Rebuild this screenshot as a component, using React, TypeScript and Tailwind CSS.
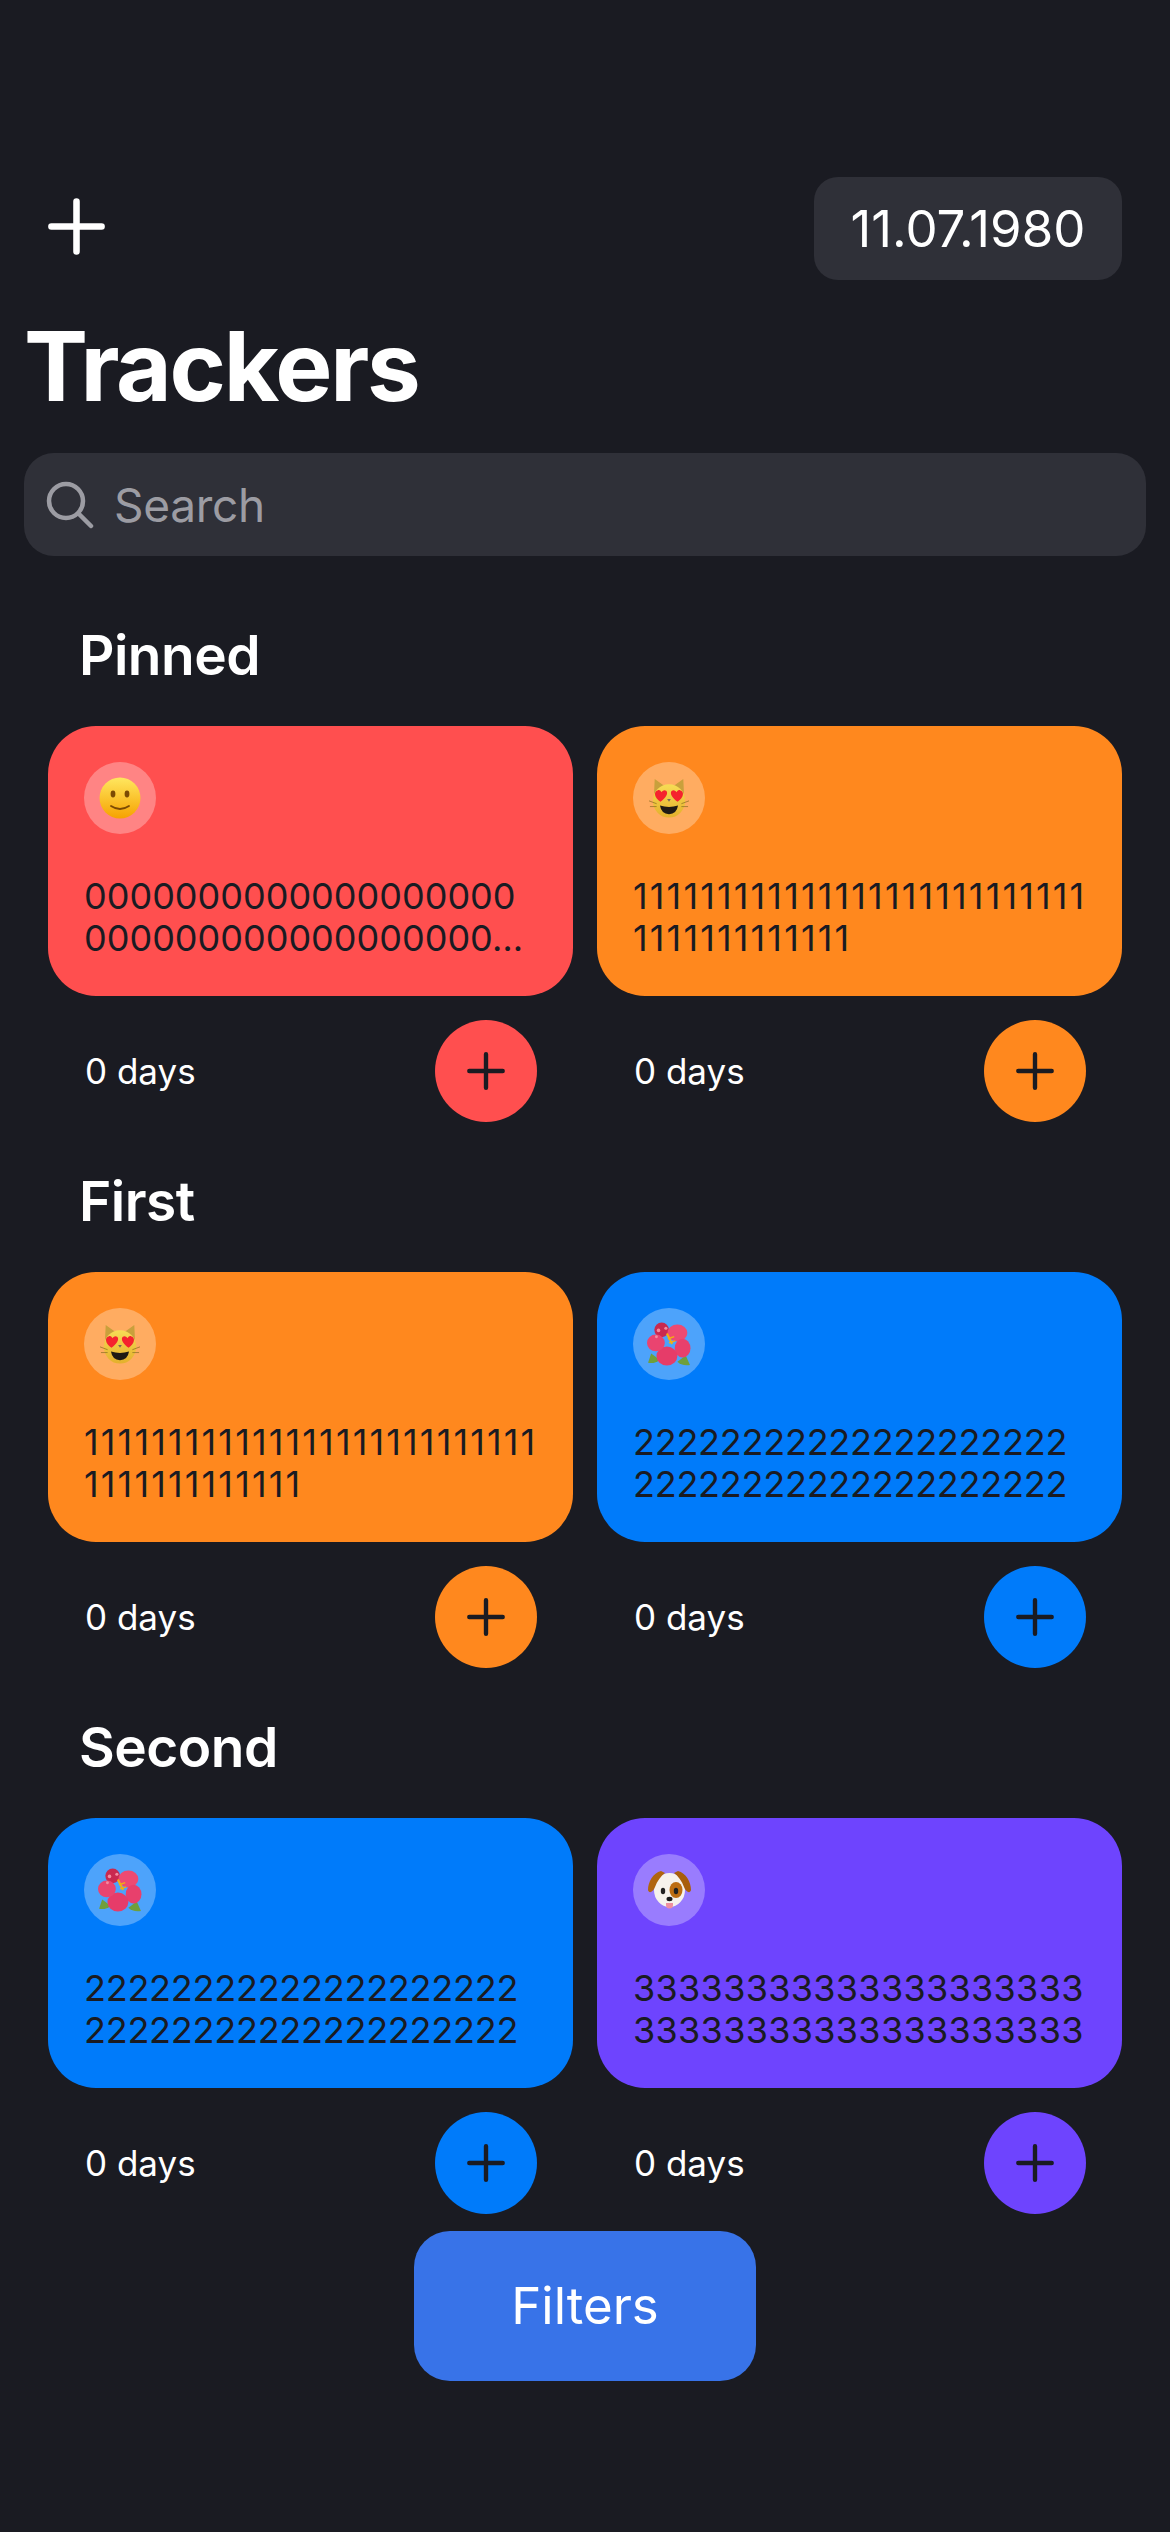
const trackers = {
  zero: {
    emoji: <SmileEmoji />,
    lines: ['0000000000000000000', '000000000000000000…'],
    color: 'bg-[#ff4f4f]',
    tracking: 'tracking-[0px]',
  },
  one: {
    emoji: <CatEmoji />,
    lines: ['111111111111111111111111111', '1111111111111'],
    color: 'bg-[#ff881e]',
    tracking: 'tracking-[2.15px]',
  },
  two: {
    emoji: <FlowerEmoji />,
    lines: ['22222222222222222222', '22222222222222222222'],
    color: 'bg-[#007bfa]',
    tracking: 'tracking-[-0.25px]',
  },
  three: {
    emoji: <DogEmoji />,
    lines: ['33333333333333333333', '33333333333333333333'],
    color: 'bg-[#6e44fe]',
    tracking: 'tracking-[0.3px]',
  },
}

const sections = [
  { name: 'Pinned', items: [trackers.zero, trackers.one] },
  { name: 'First', items: [trackers.one, trackers.two] },
  { name: 'Second', items: [trackers.two, trackers.three] },
]

export default function App() {
  return (
    <div className="h-[2532px] w-[1170px] overflow-hidden bg-[#1a1b22] pt-[177px] font-['Inter',sans-serif] text-white">
      <div className="flex items-start justify-between px-[48px]">
        <PlusIcon className="mt-[21px] h-[57px] w-[57px] text-white" />
        <div className="flex h-[103px] w-[308px] items-center justify-center rounded-[24px] bg-[#2f3038] text-[51px] leading-none">
          11.07.1980
        </div>
      </div>

      <h1 className="mt-[28px] pl-[24px] text-[96px] leading-[116px] font-bold tracking-[-2.2px]">Trackers</h1>

      <div className="mx-[24px] mt-[29px] flex h-[103px] items-center rounded-[30px] bg-[#2f3038] pl-[22px]">
        <svg viewBox="0 0 48 48" fill="none" stroke="#9c9ca3" strokeWidth="4.5" strokeLinecap="round" className="h-[48px] w-[48px]">
          <circle cx="20" cy="20" r="17" />
          <path d="M33 33 L45 45" />
        </svg>
        <span className="ml-[20px] text-[46px] leading-none tracking-[-0.3px] text-[#9c9ca3]">Search</span>
      </div>

      {sections.map((section, i) => (
        <section key={section.name} className={i === 0 ? 'mt-[65px]' : 'mt-[45px]'}>
          <h2 className="pl-[79px] text-[55px] leading-[68px] font-semibold tracking-[-0.5px]">{section.name}</h2>
          <div className="mt-[37px] grid grid-cols-[525px_525px] gap-x-[24px] px-[48px]">
            {section.items.map((t, j) => (
              <TrackerCard key={j} {...t} />
            ))}
          </div>
        </section>
      ))}

      <div className="mt-[17px] flex justify-center">
        <button className="h-[150px] w-[342px] rounded-[36px] bg-[#3873e8] text-[51px] text-white">Filters</button>
      </div>
    </div>
  )
}

function TrackerCard({ emoji, lines, color, tracking }: { emoji: React.ReactNode; lines: string[]; color: string; tracking: string }) {
  return (
    <div>
      <div className={`h-[270px] rounded-[48px] p-[36px] ${color}`}>
        <div className="flex h-[72px] w-[72px] items-center justify-center rounded-full bg-white/30">{emoji}</div>
        <p className={`mt-[41px] text-[36px] leading-[42px] whitespace-nowrap text-[#1a1b22] ${tracking}`}>
          {lines.map((line, i) => (
            <span key={i} className="block">{line}</span>
          ))}
        </p>
      </div>
      <div className="mt-[24px] flex items-center justify-between pr-[36px] pl-[37px]">
        <span className="text-[35px] leading-[44px]">0 days</span>
        <div className={`flex h-[102px] w-[102px] items-center justify-center rounded-full ${color}`}>
          <PlusIcon className="h-[38px] w-[38px] text-[#1a1b22]" />
        </div>
      </div>
    </div>
  )
}

function PlusIcon({ className }: { className: string }) {
  return (
    <svg viewBox="0 0 100 100" fill="none" className={className}>
      <path d="M50 6 V94 M6 50 H94" stroke="currentColor" strokeLinecap="round" strokeWidth="11.5" />
    </svg>
  )
}

function SmileEmoji() {
  return (
    <svg viewBox="0 0 42 42" className="h-[42px] w-[42px]">
      <defs>
        <linearGradient id="smile" x1="0" y1="0" x2="0" y2="1">
          <stop offset="0" stopColor="#ffe75f" />
          <stop offset="1" stopColor="#f6a200" />
        </linearGradient>
      </defs>
      <circle cx="21" cy="21" r="20.5" fill="url(#smile)" />
      <ellipse cx="14" cy="17" rx="2.4" ry="3.4" fill="#7c4a03" />
      <ellipse cx="28" cy="17" rx="2.4" ry="3.4" fill="#7c4a03" />
      <path d="M12 29 Q21 35 30 29" fill="none" stroke="#7c4a03" strokeWidth="1.8" strokeLinecap="round" />
    </svg>
  )
}

function CatEmoji() {
  return (
    <svg viewBox="0 0 42 42" className="h-[40px] w-[40px]">
      <defs>
        <linearGradient id="cat" x1="0" y1="0" x2="0" y2="1">
          <stop offset="0" stopColor="#f7dc55" />
          <stop offset="1" stopColor="#e4b02c" />
        </linearGradient>
      </defs>
      <path d="M6 1 L17 9 H25 L36 1 L37 22 H5 Z" fill="#c9a03c" />
      <ellipse cx="21" cy="24" rx="17" ry="17.5" fill="url(#cat)" />
      <path d="M0 24 L8 27 M42 24 L34 27 M1 30 L8 30 M41 30 L34 30" stroke="#8f7326" strokeWidth="0.8" />
      <path d="M12 25 C5 20 5 14 9 13 C11 12 12.5 13.5 13 15 C14 13.5 16 12 18 13.5 C21 16 17 22 12 25 Z" fill="#f5232e" />
      <path d="M30 25 C37 20 37 14 33 13 C31 12 29.5 13.5 29 15 C28 13.5 26 12 24 13.5 C21 16 25 22 30 25 Z" fill="#f5232e" />
      <path d="M19 22 H23 L21 25 Z" fill="#7a6a58" />
      <path d="M11.5 29 Q21 32 30.5 29 Q29 38 21 38 Q13 38 11.5 29 Z" fill="#1f1a14" />
    </svg>
  )
}

function FlowerEmoji() {
  return (
    <svg viewBox="0 0 42 42" className="h-[44px] w-[44px]">
      <path d="M1 39 L4 30 L12 36 Q8 40 1 39 Z" fill="#6f9f3c" />
      <path d="M41 41 L37 32 L29 38 Q33 42 41 41 Z" fill="#6f9f3c" />
      <ellipse cx="14" cy="7.5" rx="7" ry="7" fill="#c9294f" />
      <ellipse cx="29" cy="10.5" rx="9.5" ry="8" fill="#ee4a72" />
      <ellipse cx="34" cy="25" rx="7.5" ry="9" fill="#e8406c" />
      <ellipse cx="19" cy="32.5" rx="10" ry="9" fill="#e63c69" />
      <ellipse cx="8.5" cy="20" rx="8.5" ry="8" fill="#ea4470" />
      <path d="M19 11 L24 21" stroke="#f2ae14" strokeWidth="2" />
      <path d="M20 16 L26 14 M21 20 L27 18" stroke="#f2ae14" strokeWidth="1.3" />
      <circle cx="11" cy="8" r="1.7" fill="#f58ba0" />
      <circle cx="18" cy="6" r="1.5" fill="#f58ba0" />
      <circle cx="9" cy="14" r="1.4" fill="#f58ba0" />
    </svg>
  )
}

function DogEmoji() {
  return (
    <svg viewBox="0 0 43 40" className="h-[40px] w-[43px]">
      <ellipse cx="21.5" cy="20" rx="15.5" ry="17" fill="#f6f2ec" />
      <path d="M13 1 C5 3 0 12 0 20 C1 24 5 22 7 17 C9 11 13 6 17 3 Z" fill="#b0650e" />
      <path d="M30 1 C38 3 43 12 43 20 C42 24 38 22 36 17 C34 11 30 6 26 3 Z" fill="#a85e0c" />
      <ellipse cx="28" cy="20" rx="6.5" ry="8" fill="#bd6d12" />
      <ellipse cx="15" cy="21" rx="2.2" ry="3.2" fill="#222" />
      <ellipse cx="28" cy="21" rx="2.2" ry="3.2" fill="#222" />
      <ellipse cx="21.5" cy="29" rx="3" ry="2.2" fill="#1b1b1b" />
      <path d="M18 33 H25 V35 A3.5 3.5 0 0 1 18 35 Z" fill="#ef8f9f" />
    </svg>
  )
}
